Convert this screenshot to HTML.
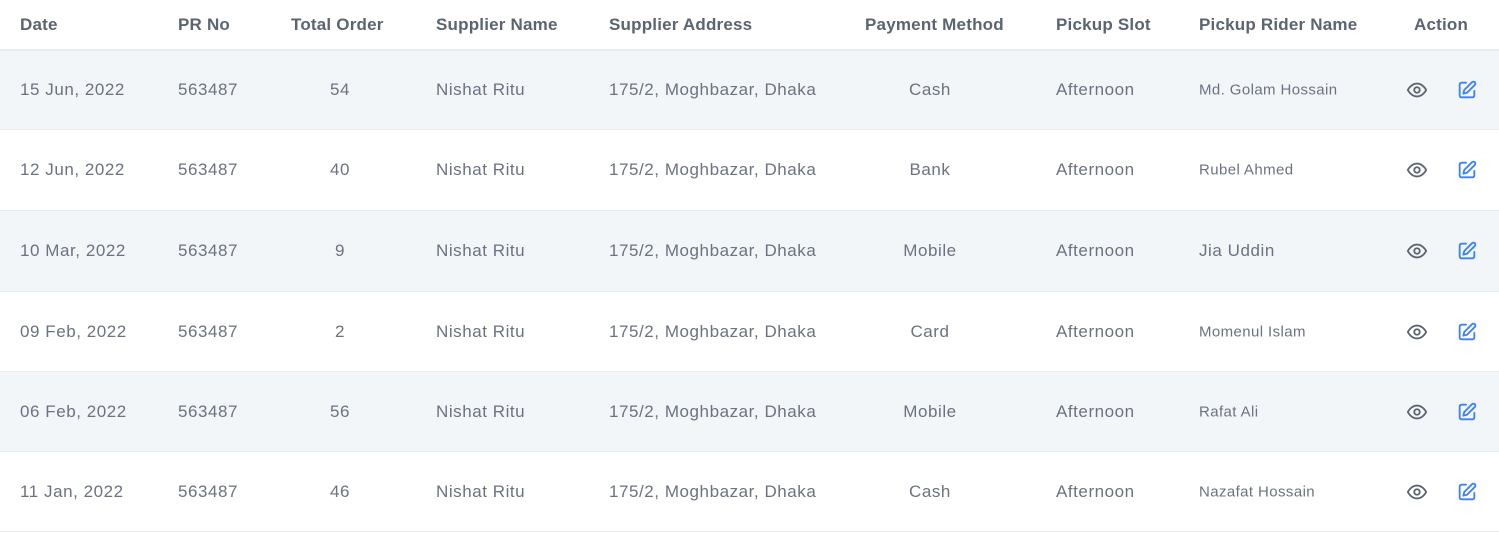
<!DOCTYPE html>
<html><head><style>
body{margin:0;width:1499px;height:533px;background:#fff;font-family:"Liberation Sans",sans-serif;position:relative;overflow:hidden}
.h{position:absolute;top:0;left:0;width:1499px;height:49px;border-bottom:2px solid #e9ecef}
.r{position:absolute;left:0;width:1499px;border-bottom:1px solid #e9ecef}
.r.a{background:#f3f6f9}
.t{position:absolute;white-space:nowrap;transform:translateY(-50%);top:50%}
.h .t{font-weight:bold;font-size:17px;color:#5b6470;letter-spacing:0.2px}
.r .t{font-size:17px;color:#6b7280;letter-spacing:0.55px}
.r .t.s{font-size:15px;letter-spacing:0.4px}
.c{transform:translate(-50%,-50%)}
svg{position:absolute;top:50%;transform:translate(-50%,-50%)}
</style></head><body>
<div class="h">
<span class="t" style="left:20px">Date</span>
<span class="t" style="left:178px">PR No</span>
<span class="t" style="left:291px">Total Order</span>
<span class="t" style="left:436px">Supplier Name</span>
<span class="t" style="left:609px">Supplier Address</span>
<span class="t" style="left:865px">Payment Method</span>
<span class="t" style="left:1056px">Pickup Slot</span>
<span class="t" style="left:1199px">Pickup Rider Name</span>
<span class="t" style="left:1414px">Action</span>
</div>
<script>
const rows=[["15 Jun, 2022","54","Cash","Md. Golam Hossain",51,79],["12 Jun, 2022","40","Bank","Rubel Ahmed",130,81],["10 Mar, 2022","9","Mobile","Jia Uddin",211,81],["09 Feb, 2022","2","Card","Momenul Islam",292,80],["06 Feb, 2022","56","Mobile","Rafat Ali",372,80],["11 Jan, 2022","46","Cash","Nazafat Hossain",452,80]];
let h="";rows.forEach((r,i)=>{h+=`<div class="r${i%2==0?' a':''}" style="top:${r[4]}px;height:${r[5]-1}px">
<span class="t" style="left:20px">${r[0]}</span>
<span class="t" style="left:178px">563487</span>
<span class="t c" style="left:340px">${r[1]}</span>
<span class="t" style="left:436px">Nishat Ritu</span>
<span class="t" style="left:609px">175/2, Moghbazar, Dhaka</span>
<span class="t c" style="left:930px">${r[2]}</span>
<span class="t" style="left:1056px">Afternoon</span>
<span class="t ${i==2?'':'s'}" style="left:1199px">${r[3]}</span>
<svg style="left:1417px" width="22" height="22" viewBox="0 0 24 24" fill="none" stroke="#5b6470" stroke-width="2" stroke-linecap="round" stroke-linejoin="round"><path d="M2 12s3.5-7 10-7 10 7 10 7-3.5 7-10 7S2 12 2 12z"/><circle cx="12" cy="12" r="3"/></svg>
<svg style="left:1467px" width="22" height="22" viewBox="0 0 24 24" fill="none" stroke="#3b82f6" stroke-width="2" stroke-linecap="round" stroke-linejoin="round"><path d="M11 4H6a2 2 0 0 0-2 2v12a2 2 0 0 0 2 2h12a2 2 0 0 0 2-2v-5"/><path d="M17.5 3.5a2.1 2.1 0 0 1 3 3L12 15l-4 1 1-4 8.5-8.5z"/></svg>
</div>`});document.write(h);
</script>
</body></html>
